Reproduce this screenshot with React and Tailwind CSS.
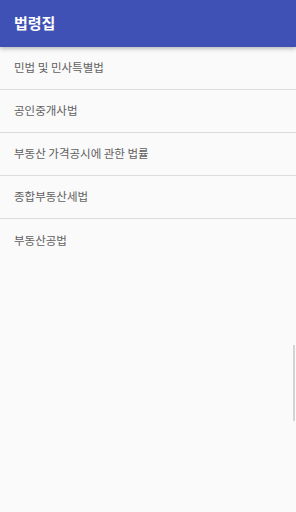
import React from 'react';

const laws = [
  '민법 및 민사특별법',
  '공인중개사법',
  '부동산 가격공시에 관한 법률',
  '종합부동산세법',
  '부동산공법',
];

const App = () => {
  return (
    <div
      className="relative w-[296px] h-[512px] bg-[#fafafa] overflow-hidden"
      style={{ fontFamily: '"Noto Sans CJK KR", "Noto Sans", sans-serif' }}
    >
      {/* 상단 툴바 */}
      <div className="relative z-10 h-[47px] bg-[#3f51b5] flex items-center px-[14px] shadow-[0_2px_4px_rgba(0,0,0,0.25)]">
        <h1 className="text-white text-[15px] font-bold">법령집</h1>
      </div>

      {/* 법령 목록 */}
      <ul>
        {laws.map((law, i) => (
          <li
            key={law}
            className={`h-[43px] flex items-center px-[14px] text-[11.5px] text-[#616161] ${
              i < laws.length - 1 ? 'border-b border-[#dcdcdc]' : ''
            }`}
          >
            {law}
          </li>
        ))}
      </ul>

      {/* 스크롤바 */}
      <div className="absolute right-[1px] top-[345px] w-[2px] h-[76px] bg-[#d4d4d4]" />
    </div>
  );
};

export default App;
